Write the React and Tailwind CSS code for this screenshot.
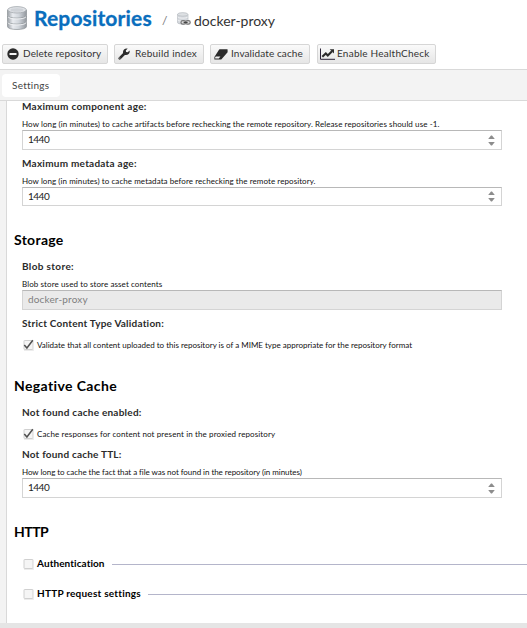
import React from "react";

function Database({ className }) {
  return (
    <svg className={className} viewBox="0 0 20 24" fill="none">
      <defs>
        <linearGradient id="metal" x1="0" x2="1">
          <stop offset="0" stopColor="#9a9fa5" />
          <stop offset=".28" stopColor="#e9ecf0" />
          <stop offset=".6" stopColor="#d0d5db" />
          <stop offset="1" stopColor="#92979d" />
        </linearGradient>
      </defs>
      <path d="M.5 16.5v4C.5 24.500 19.500 24.500 19.500 20.500v-4z" fill="url(#metal)" stroke="#8b9095" strokeWidth=".7" />
      <path d="M.5 10v5.500C.5 19 19.500 19 19.500 15.500V10z" fill="url(#metal)" stroke="#8b9095" strokeWidth=".7" />
      <path d="M.5 4v5.500C.5 13 19.500 13 19.500 9.500V4z" fill="url(#metal)" stroke="#8b9095" strokeWidth=".7" />
      <path d="M1 10.700c1 3 17 3 18 0M1 16.700c1 3 17 3 18 0" stroke="#f4f5f7" strokeWidth=".9" />
      <ellipse cx="10" cy="3.800" rx="9.300" ry="3.200" fill="#dee1e5" stroke="#a5aaaf" strokeWidth=".8" />
      <ellipse cx="10" cy="4" rx="6.500" ry="1.700" fill="#ced2d7" />
    </svg>
  );
}

function ProxyIcon() {
  return (
    <svg className="h-[14px] w-[14px]" viewBox="0 0 14 14" fill="none">
      <path d="M.4 2.500v8c0 2 10.600 2 10.600 0v-8z" fill="#d3d7dc" stroke="#adb2b8" strokeWidth=".6" />
      <path d="M.7 5c1 1.500 9 1.500 10 0M.7 8c1 1.500 9 1.500 10 0" stroke="#f3f4f5" strokeWidth=".9" />
      <ellipse cx="5.700" cy="2.400" rx="5.200" ry="1.800" fill="#dde0e3" stroke="#b0b5ba" strokeWidth=".6" />
      <rect x="4" y="8.600" width="4.600" height="3.600" rx="1.700" fill="#ddd" stroke="#777" strokeWidth="1.200" />
      <rect x="8.600" y="8.600" width="4.600" height="3.600" rx="1.700" fill="#ddd" stroke="#777" strokeWidth="1.200" />
      <path d="M6.600 10.400h4" stroke="#444" strokeWidth="1.200" />
    </svg>
  );
}

const icons = {
  remove: (
    <svg className="size-[12px]" viewBox="0 0 12 12">
      <circle cx="6" cy="6" r="5.700" fill="#2b2b2b" />
      <rect x="2.500" y="5" width="7" height="2" fill="#f5f5f5" />
    </svg>
  ),
  wrench: (
    <svg className="size-[12px]" viewBox="0 0 12 12" fill="none">
      <path d="M1.700 10.300 6.500 5.500" stroke="#2b2b2b" strokeWidth="2.600" strokeLinecap="round" />
      <path d="M5 4.800C4.700 2 6.800.1 9.700.6L7.800 2.400l.3 1.500 1.600.3L11.600 2.500C12.200 5.200 10 7.400 7.100 6.900z" fill="#2b2b2b" />
      <circle cx="1.900" cy="10.100" r=".5" fill="#eee" />
    </svg>
  ),
  eraser: (
    <svg className="h-[11px] w-[14px]" viewBox="0 0 14 11">
      <path d="M5.600.3h7.500q.8 0 .5.900v2L7.700 10.100q-.4.500-1 .5H.9q-.8 0-.5-.9V8L5 .7z" fill="#2b2b2b" />
      <path d="M1.800 7.400h4.600L4.800 9.500H1.200V8.200z" fill="#f2f2f2" />
    </svg>
  ),
  chart: (
    <svg className="h-[12px] w-[15px]" viewBox="0 0 15 12" fill="none">
      <path d="M.5.500v10.800H15" stroke="#2c2438" strokeWidth="1" />
      <path d="m2.300 8.800 3.500-3.300 2 2L12 3.300" stroke="#2b2b2b" strokeWidth="2.100" />
      <path d="M9.700 1.200H14v4.300z" fill="#2b2b2b" />
    </svg>
  ),
};

function ToolButton({ icon, className, label, text }) {
  return (
    <button className={`flex h-5 shrink-0 items-center rounded-[2px] border border-[#d6d6d6] bg-linear-to-b from-[#fafafa] to-[#e6e6e6] whitespace-nowrap text-[#333] ${className}`}>
      {icons[icon]}
      <span className={`mb-px text-[10px] leading-[13px] ${text}`}>{label}</span>
    </button>
  );
}

function Label({ children, className }) {
  return <div className={`ml-[15px] h-[14px] text-[10px] leading-[13px] font-bold whitespace-nowrap text-[#2b2b2b] ${className}`}>{children}</div>;
}

function Help({ children, className }) {
  return <div className={`ml-[15px] h-[10px] text-[8px] leading-[9px] whitespace-nowrap text-[#111] ${className}`}>{children}</div>;
}

function NumberField({ className }) {
  return (
    <div className={`ml-[15px] flex w-[480px] items-center justify-between border border-[#d4d4d4] border-t-[#b8b8b8] bg-white pr-[6px] pl-[5px] ${className}`}>
      <span className="mb-[2px] text-[10px] leading-[14px] tracking-[-0.5px] text-[#222]">1440</span>
      <svg className="h-[11px] w-[7px]" viewBox="0 0 7 11" fill="#8c8c8c">
        <path d="M3 .5h1L6.800 4H.2zM.2 7h6.600L4 10.500H3z" />
      </svg>
    </div>
  );
}

function Heading({ children, className }) {
  return <h2 className={`ml-[7px] h-[18px] text-[14px] leading-[18px] font-bold whitespace-nowrap text-black ${className}`}>{children}</h2>;
}

function Check({ checked }) {
  return (
    <svg className="h-[12px] w-[12px] shrink-0" viewBox="0 0 12 12" fill="none">
      <rect x="2" y="1.500" width="9" height="9" rx=".5" fill="#f5f5f5" stroke="#d0d0d0" />
      <path d="M2 11.500h9.700V2" stroke="#ececec" />
      {checked && <path d="m2.300 6 2.600 3L10.800 1.300" stroke="#505050" strokeWidth="1.500" />}
    </svg>
  );
}

function CheckRow({ children, className, text }) {
  return (
    <div className={`ml-[15px] flex h-[12px] items-center ${className}`}>
      <Check checked />
      <span className={`ml-[3px] text-[8px] leading-[10px] whitespace-nowrap text-[#111] ${text}`}>{children}</span>
    </div>
  );
}

function Fieldset({ children, className, text }) {
  return (
    <div className={`ml-[15px] flex h-[14px] items-center ${className}`}>
      <Check />
      <span className={`ml-[3px] h-[14px] shrink-0 text-[10px] leading-[13px] font-bold whitespace-nowrap text-black ${text}`}>{children}</span>
      <div className="h-px flex-1 bg-[#b4b5ca]" />
    </div>
  );
}

export default function App() {
  return (
    <div className="flex h-[628px] w-[527px] flex-col overflow-hidden bg-white font-['Lato',sans-serif] [font-variant-ligatures:none]">
      <header className="flex h-[44px] shrink-0 items-start pl-[7px]">
        <Database className="mt-[6px] h-[24px] w-[20px]" />
        <h1 className="ml-[7px] mt-[5px] w-[120px] text-[21px] leading-[26px] font-bold tracking-[0.15px] whitespace-nowrap text-[#0a6ebd] [-webkit-text-stroke:0.3px_#0a6ebd]">Repositories</h1>
        <span className="mt-[13px] ml-[8px] w-[14px] text-[12px] leading-[16px] text-[#777]">/</span>
        <div className="mt-[12px] ml-px"><ProxyIcon /></div>
        <span className="mt-[12px] ml-[3px] text-[14px] leading-[18px] whitespace-nowrap text-[#333]">docker-proxy</span>
      </header>
      <div className="flex h-[25px] shrink-0 pl-[2px]">
        <ToolButton icon="remove" label="Delete repository" className="w-[106px] gap-[4px] pl-[4px]" text="tracking-[0.1px]" />
        <ToolButton icon="wrench" label="Rebuild index" className="ml-[6px] w-[90px] gap-[5px] pl-[3px]" text="tracking-[0.23px]" />
        <ToolButton icon="eraser" label="Invalidate cache" className="ml-[6px] w-[100px] gap-[3px] pl-[3px]" text="tracking-[0.1px]" />
        <ToolButton icon="chart" label="Enable HealthCheck" className="ml-[7px] w-[119px] gap-[2px] pl-[2px]" text="tracking-[0.23px]" />
      </div>
      <nav className="flex h-8 shrink-0 border-y border-[#d9d9d9] bg-[#f3f3f3] pt-[4px] pl-[2px]">
        <div className="flex h-[23px] w-[58px] items-center rounded-[4px] bg-white pl-[10px] text-[10px] tracking-[0.25px] text-[#444]">Settings</div>
      </nav>
      <div className="flex h-[522px] shrink-0 bg-[#f3f3f3]">
        <main className="ml-[6px] flex w-[521px] flex-col overflow-hidden border-l border-[#d9d9d9] bg-white">
          <Label className="-mt-px tracking-[0.3px]">Maximum component age:</Label>
          <Help className="mt-[6px] tracking-[0.09px]">How long (in minutes) to cache artifacts before rechecking the remote repository. Release repositories should use -1.</Help>
          <NumberField className="h-[20px]" />
          <Label className="mt-[7px] tracking-[0.25px]">Maximum metadata age:</Label>
          <Help className="mt-[6px] tracking-[0.07px]">How long (in minutes) to cache metadata before rechecking the remote repository.</Help>
          <NumberField className="h-[19px]" />
          <Heading className="mt-[25px] tracking-[0.3px]">Storage</Heading>
          <Label className="mt-[11px] tracking-[0.35px]">Blob store:</Label>
          <Help className="mt-[6px] tracking-[0.1px]">Blob store used to store asset contents</Help>
          <div className="ml-[15px] flex h-[20px] w-[480px] items-center border border-[#d4d4d4] border-t-[#b8b8b8] bg-[#eaeaea] pb-px pl-[5px] text-[10px] leading-[13px] tracking-[0.15px] text-[#808080]">docker-proxy</div>
          <Label className="mt-[7px] tracking-[0.22px]">Strict Content Type Validation:</Label>
          <CheckRow className="mt-[8px]">Validate that all content uploaded to this repository is of a MIME type appropriate for the repository format</CheckRow>
          <Heading className="mt-[26px] tracking-[0.38px]">Negative Cache</Heading>
          <Label className="mt-[11px] tracking-[0.24px]">Not found cache enabled:</Label>
          <CheckRow className="mt-[8px]" text="tracking-[0.12px]">Cache responses for content not present in the proxied repository</CheckRow>
          <Label className="mt-[8px] tracking-[0.2px]">Not found cache TTL:</Label>
          <Help className="mt-[6px] tracking-[-0.05px]">How long to cache the fact that a file was not found in the repository (in minutes)</Help>
          <NumberField className="h-[20px]" />
          <Heading className="mt-[25px] tracking-[-0.5px]">HTTP</Heading>
          <Fieldset className="mt-[16px]" text="w-[75px] tracking-[0.08px]">Authentication</Fieldset>
          <Fieldset className="mt-[16px]" text="w-[111px] tracking-[0.23px]">HTTP request settings</Fieldset>
        </main>
      </div>
      <footer className="h-[5px] shrink-0 bg-[#e5e5e5]" />
    </div>
  );
}
